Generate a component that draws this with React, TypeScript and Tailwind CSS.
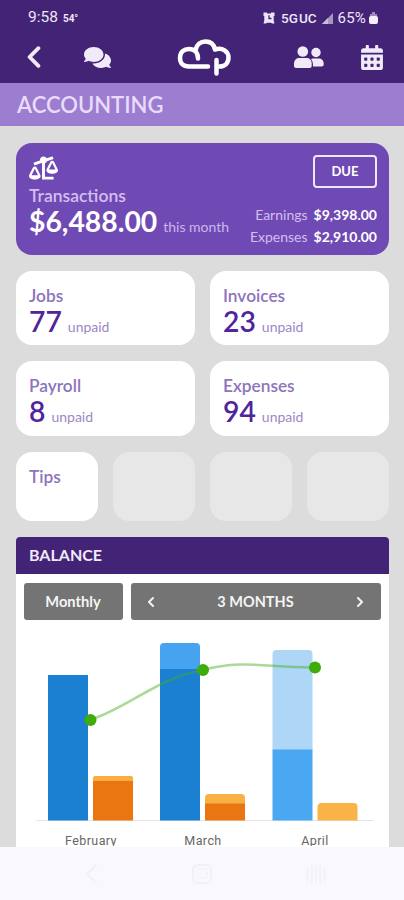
import { FaBalanceScaleLeft, FaCalendarAlt, FaComments } from 'react-icons/fa'

const STATS = [
  { label: 'Jobs', count: 77 },
  { label: 'Invoices', count: 23 },
  { label: 'Payroll', count: 8 },
  { label: 'Expenses', count: 94 },
]

function Chevron({ className, flip = false, weight = 3 }: { className: string; flip?: boolean; weight?: number }) {
  return (
    <svg viewBox="0 0 12 20" className={className} fill="none" stroke="currentColor" strokeWidth={weight} strokeLinecap="round" strokeLinejoin="round">
      <path d={flip ? 'M2 2L10 10L2 18' : 'M10 2L2 10L10 18'} />
    </svg>
  )
}

function Logo() {
  return (
    <svg viewBox="0 0 56 38" className="h-[38px] w-[56px]" fill="none" stroke="white" strokeWidth="4.500" strokeLinecap="round" strokeLinejoin="round">
      <path d="M31 28.500H12C6 28.500 3 25 3 20C3 14 7 11 12 11C17.500 11 21 14.500 21 20.500" />
      <path d="M18.500 12C19.500 6.500 23.500 3.500 28.500 3.500C33.500 3.500 37 6.500 38 11.500C45.500 9 51.500 13.500 51.500 19.500C51.500 25 48 28.500 42.500 28.500" />
      <path d="M39.500 22V35.500" />
    </svg>
  )
}

function People() {
  return (
    <svg viewBox="0 0 30 23" className="h-[23px] w-[30px]" fill="currentColor">
      <circle cx="8.800" cy="5.500" r="5.300" />
      <circle cx="22" cy="6.500" r="4.700" />
      <path d="M5 12H13C16 12 17.700 14.500 17.700 17.500V20Q17.700 22 15.700 22H2Q0 22 0 20V17.500C0 14.500 2 12 5 12z" />
      <path d="M18.500 12.500H25C28 12.500 29.700 15 29.700 17.500V18.500Q29.700 20.500 27.700 20.500H19C19 17 18.800 15.500 17 13.300z" />
    </svg>
  )
}

function StatusBar() {
  return (
    <div className="flex h-9 items-center justify-between pr-[26px] pl-7 font-['Roboto',sans-serif] text-[14px] text-[#eee6f8]">
      <div className="flex items-center gap-[5px]">
        <span className="text-[15.500px]">9:58</span>
        <span className="text-[10px] font-bold">54°</span>
      </div>
      <div className="flex items-center">
        <svg viewBox="0 0 12 12" className="mr-[6px] h-3 w-3">
          <path d="M0.500 0.500H4V1.500H8V0.500H11.500V4H10.700V8.500L11.500 11.500H9L8 10.800H4L3 11.500H0.500L1.300 8.500V4H0.500z" fill="currentColor" />
          <path d="M6 3.300V6.500H8.500" fill="none" stroke="#432376" strokeWidth="1.300" />
        </svg>
        <span className="text-[13.500px] font-medium">5G</span>
        <span className="ml-[1px] text-[13.500px] font-medium">UC</span>
        <svg viewBox="0 0 11 11" className="ml-[5px] h-[11px] w-[11px]">
          <path d="M11 0V11H0z" fill="#a796c1" />
          <path d="M6 5V11H0z" fill="#c9bcdd" />
        </svg>
        <span className="ml-[5px] text-[15px] tracking-[0.2px]">65%</span>
        <svg viewBox="0 0 9 12" className="ml-[3px] h-3 w-[9px]">
          <path d="M3 0h3v2h2v4H1V2h2z" fill="#9d8bb9" />
          <rect y="4" width="9" height="8" rx="2" fill="#f3eefa" />
        </svg>
      </div>
    </div>
  )
}

function Header() {
  return (
    <header className="h-[83px] shrink-0 bg-[#432376] text-[#f1eaf8]">
      <StatusBar />
      <div className="grid h-[42px] grid-cols-[1fr_56px_1fr] items-center pr-[21px] pl-[27px]">
        <div className="flex items-center gap-[43px]">
          <Chevron className="h-[22px] w-[14px]" weight={3.5} />
          <FaComments className="h-[27px] w-[27px]" />
        </div>
        <Logo />
        <div className="flex items-center justify-end gap-[37px]">
          <People />
          <FaCalendarAlt className="h-[25px] w-[22px]" />
        </div>
      </div>
    </header>
  )
}

function Transactions() {
  return (
    <section className="flex h-28 shrink-0 justify-between rounded-[16px] bg-[#704ab4] py-3 pr-[11.500px] pl-[13.500px] text-white">
      <div>
        <FaBalanceScaleLeft className="h-[26px] w-[29px]" />
        <div className="mt-[5px] text-[17.500px] leading-5 font-semibold text-[#d3bfef]">Transactions</div>
        <div className="flex items-baseline gap-[6px] leading-[30px] whitespace-nowrap">
          <span className="text-[28.300px] font-bold">$6,488.00</span>
          <span className="text-[14px] text-[#cbb7e9]">this month</span>
        </div>
      </div>
      <div className="flex flex-col items-end">
        <button className="h-[33px] w-[64px] shrink-0 rounded-[4px] border-2 border-[#eee6fa] text-[13px] font-bold">DUE</button>
        <div className="mt-4 grid grid-cols-[auto_auto] gap-x-[6px] text-right text-[14px] leading-[21.500px]">
          <span className="text-[#d3bfef]">Earnings</span>
          <span className="font-bold">$9,398.00</span>
          <span className="text-[#d3bfef]">Expenses</span>
          <span className="font-bold">$2,910.00</span>
        </div>
      </div>
    </section>
  )
}

function StatCard({ label, count }: { label: string; count: number }) {
  return (
    <div className="h-[74.500px] rounded-[16px] bg-white pt-[15px] pl-[13.500px]">
      <div className="text-[17.300px] leading-5 font-semibold text-[#8c74bd]">{label}</div>
      <div className="flex items-baseline gap-[6px] leading-[30px]">
        <span className="text-[28.300px] font-semibold text-[#50249b]">{count}</span>
        <span className="text-[14px] text-[#9c87c5]">unpaid</span>
      </div>
    </div>
  )
}

function Chart() {
  return (
    <svg viewBox="0 0 373 226" className="h-[226px] w-[373px] shrink-0">
      <path d="M20 200.500H357" stroke="#e4e4e4" />
      <path d="M32 55H72V200.500H32z" fill="#1c80d2" />
      <path d="M77 162V158Q77 156 79 156H115Q117 156 117 158V162z" fill="#f9ad43" />
      <path d="M77 161H117V200.500H77z" fill="#ea7611" />
      <path d="M144 50V27Q144 23 148 23H180Q184 23 184 27V50z" fill="#46a3f0" />
      <path d="M144 49H184V200.500H144z" fill="#1c80d2" />
      <path d="M189 184V178Q189 174 193 174H225Q229 174 229 178V184z" fill="#f9b047" />
      <path d="M189 183.500H229V200.500H189z" fill="#ea7611" />
      <path d="M256.500 130V34Q256.500 30 260.500 30H292.500Q296.500 30 296.500 34V130z" fill="#add6f7" />
      <path d="M256.500 129.500H296.500V200.500H256.500z" fill="#4aa7f2" />
      <path d="M301.500 200.500V187Q301.500 183 305.500 183H337.500Q341.500 183 341.500 187V200.500z" fill="#f9b347" />
      <path d="M74 100C112 88 141 58 187 50C228 39 251 48 299 47.500" fill="none" stroke="#43ad1b" strokeOpacity="0.45" strokeWidth="2.500" />
      <g fill="#3fac0c">
        <circle cx="74.500" cy="100" r="6" />
        <circle cx="187" cy="50" r="6" />
        <circle cx="299" cy="47.500" r="6" />
      </g>
      <g fill="#666" fontFamily="Roboto, sans-serif" fontSize="12.500" textAnchor="middle" letterSpacing="0.400">
        <text x="75" y="224.500">February</text>
        <text x="187" y="224.500">March</text>
        <text x="299" y="224.500">April</text>
      </g>
    </svg>
  )
}

function Balance() {
  return (
    <section className="mt-4 flex min-h-0 flex-1 flex-col overflow-hidden rounded-t-[4px] bg-white">
      <h2 className="flex h-[37.500px] shrink-0 items-center bg-[#432376] pl-[13.500px] text-[16px] font-bold text-[#f0e9f8]">BALANCE</h2>
      <div className="flex gap-2 px-2 pt-[9px] font-bold text-[#f4f4f4]">
        <button className="h-[37px] w-[99px] rounded-[3px] bg-[#747474] text-[14.700px]">Monthly</button>
        <div className="flex h-[37px] flex-1 items-center justify-between rounded-[3px] bg-[#747474] px-[17px] text-[14.500px]">
          <Chevron className="h-[10px] w-[6px]" weight={4} />
          <span>3 MONTHS</span>
          <Chevron className="h-[10px] w-[6px]" weight={4} flip />
        </div>
      </div>
      <Chart />
    </section>
  )
}

function NavigationBar() {
  return (
    <nav className="flex h-[53px] shrink-0 items-center justify-between bg-[#f9f8fd] pr-[78px] pl-[84px] text-[#f1f0f5]">
      <svg viewBox="0 0 14 20" className="h-5 w-[14px]" fill="none" stroke="currentColor" strokeWidth="2">
        <path d="M12 1L3 10L12 19" />
      </svg>
      <svg viewBox="0 0 20 20" className="h-5 w-5" fill="none" stroke="currentColor" strokeWidth="2">
        <rect x="1" y="1" width="18" height="18" rx="5" />
        <rect x="5" y="5" width="10" height="9" rx="2" strokeWidth="1" />
      </svg>
      <svg viewBox="0 0 20 20" className="h-5 w-5" fill="none" stroke="currentColor" strokeWidth="1.500">
        <path d="M1.500 3V17M5.800 1V19M10 1V19M14.200 1V19M18.500 3V17" />
      </svg>
    </nav>
  )
}

export default function App() {
  return (
    <div className="flex h-[900px] w-[404px] flex-col overflow-hidden bg-[#dcdcdc] font-['Lato',sans-serif]">
      <Header />
      <h1 className="flex h-[43px] shrink-0 items-center bg-[#9c7dd0] pl-[17px] text-[22px] font-semibold text-[#eadbfb]">ACCOUNTING</h1>
      <main className="flex min-h-0 flex-1 flex-col px-[15.500px] pt-[17px]">
        <Transactions />
        <div className="mt-[15.500px] grid grid-cols-2 gap-x-[15px] gap-y-4">
          {STATS.map((stat) => (
            <StatCard key={stat.label} {...stat} />
          ))}
        </div>
        <div className="mt-4 grid grid-cols-4 gap-[15px]">
          <div className="h-[69px] rounded-[16px] bg-white pt-[15px] pl-[13.500px] text-[17.300px] leading-5 font-semibold text-[#8c74bd]">Tips</div>
          <div className="rounded-[16px] bg-[#e7e7e7]" />
          <div className="rounded-[16px] bg-[#e7e7e7]" />
          <div className="rounded-[16px] bg-[#e7e7e7]" />
        </div>
        <Balance />
      </main>
      <NavigationBar />
    </div>
  )
}
